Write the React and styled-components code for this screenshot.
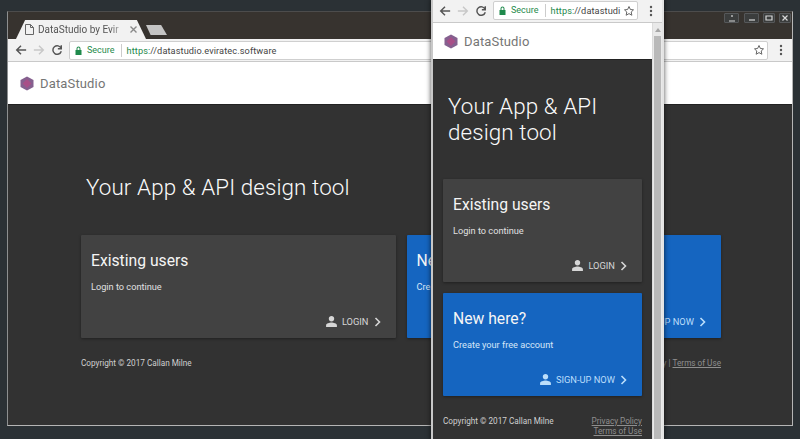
import React from "react";
import styled, { createGlobalStyle } from "styled-components";

const Global = createGlobalStyle`
  html, body { margin: 0; padding: 0; background: #2b3135; overflow: hidden; }
  #root { width: 800px; height: 439px; }
  * { box-sizing: border-box; }
`;

const Desktop = styled.div`
  position: relative;
  width: 800px;
  height: 439px;
  overflow: hidden;
  background: #2b3135;
  font-family: Roboto, "Liberation Sans", sans-serif;
`;

const DesktopWindow = styled.div`
  position: absolute;
  left: 7px;
  top: 11px;
  width: 786px;
  height: 415px;
  display: flex;
  flex-direction: column;
  background: #37332f;
  border: 1px solid #4c4c4c;
  border-bottom-color: #b5b5b5;
  border-right-color: #b5b5b5;
  border-left-color: #8d8f90;
`;

const PhoneWindow = styled.div`
  position: absolute;
  left: 431px;
  top: -1px;
  width: 233px;
  height: 442px;
  display: flex;
  flex-direction: column;
  background: #d8d8d8;
  border-left: 2px solid #c8c8c8;
  border-right: 2px solid #e3e3e3;
  box-shadow: 0 0 5px rgba(0, 0, 0, 0.7);
`;

const TabStrip = styled.div`
  height: 27px;
  display: flex;
  align-items: flex-end;
  padding-left: 8px;
  flex: none;
`;

const Tab = styled.div`
  width: 130px;
  height: 19px;
  display: flex;
  align-items: center;
  gap: 4px;
  padding: 0 9px;
  background: #f2f2f2;
  clip-path: polygon(0 100%, 7% 0, 93% 0, 100% 100%);
  font-size: 10px;
  color: #555;
  white-space: nowrap;
`;

const TabTitle = styled.span`
  flex: 1;
  min-width: 0;
  -webkit-mask-image: linear-gradient(90deg, #000 82%, transparent);
  mask-image: linear-gradient(90deg, #000 82%, transparent);
`;

const TabClose = styled.svg`
  width: 7px;
  height: 7px;
  flex: none;
  fill: none;
  stroke: #8a8a8a;
  stroke-width: 1.4;
`;

const NewTab = styled.div`
  width: 21px;
  height: 10px;
  margin: 0 0 4px 0;
  background: #c4c4c4;
  clip-path: polygon(0 0, 72% 0, 100% 100%, 22% 100%);
`;

const Toolbar = styled.div`
  flex: none;
  height: ${(p) => p.$h}px;
  display: flex;
  align-items: center;
  background: #f2f2f2;
  padding: 0 5px 0 ${(p) => p.$left}px;
  gap: 6px;
  border-bottom: 1px solid #c9c9c9;
`;

const NavIcon = styled.svg`
  width: 12px;
  height: 12px;
  flex: none;
  fill: none;
  stroke: ${(p) => p.$color || "#555"};
  stroke-width: 1.7;
`;

const UrlBar = styled.div`
  flex: 1;
  min-width: 0;
  height: 19px;
  display: flex;
  align-items: center;
  padding: 0 2px 0 5px;
  background: #fff;
  border: 1px solid #cfcfcf;
  border-radius: 2px;
  font-size: 9.2px;
  white-space: nowrap;
  letter-spacing: 0.1px;
`;

const Secure = styled.span`
  display: flex;
  align-items: center;
  gap: 5px;
  color: #1f8a4c;
  font-size: 9px;
  letter-spacing: 0;
  padding-right: 6px;
  margin-right: 5px;
  border-right: 1px solid #ccc;
  line-height: 13px;
`;

const UrlText = styled.span`
  flex: 1;
  min-width: 0;
  color: #444;
`;

const Https = styled.span`
  color: #1f8a4c;
`;

const StarIcon = styled.svg`
  width: 12px;
  height: 12px;
  flex: none;
  fill: none;
  stroke: #666;
  stroke-width: 2;
`;

const LockIcon = styled.svg`
  width: 7px;
  height: 9px;
  flex: none;
  fill: #1f8a4c;
`;

const PageIcon = styled.svg`
  width: 9px;
  height: 11px;
  flex: none;
  fill: none;
  stroke: #666;
`;

const MenuDots = styled.svg`
  width: 12px;
  height: 12px;
  flex: none;
  margin-left: 1px;
  fill: #555;
`;

const Page = styled.div`
  flex: 1;
  min-height: 0;
  display: flex;
  background: #fff;
`;

const PageColumn = styled.div`
  flex: 1;
  min-width: 0;
  display: flex;
  flex-direction: column;
`;

const Header = styled.header`
  flex: none;
  height: ${(p) => p.$h}px;
  display: flex;
  align-items: center;
  gap: 6px;
  padding-left: ${(p) => p.$pad}px;
  background: #fff;
  color: #757575;
  font-size: 13px;
  letter-spacing: 0.15px;
`;

const Main = styled.main`
  flex: 1;
  min-height: 0;
  background: #323232;
  border-top: 1px solid #222;
  padding: ${(p) => p.$pad};
  color: #fff;
`;

const Title = styled.h1`
  margin: 0;
  font-weight: 300;
  font-size: 22.4px;
  line-height: 26px;
  letter-spacing: 0.1px;
  color: #fafafa;
  padding: ${(p) => p.$pad};
`;

const Cards = styled.div`
  display: flex;
  flex-direction: ${(p) => (p.$stack ? "column" : "row")};
  gap: 11px;
`;

const Card = styled.section`
  flex: ${(p) => (p.$fixed ? "none" : "1 1 0")};
  min-width: 0;
  height: 103px;
  display: flex;
  flex-direction: column;
  padding: 16px 11px 0 10px;
  background: ${(p) => (p.$blue ? "#1565c0" : "#424242")};
  border-radius: 1px;
  box-shadow: 0 1px 3px rgba(0, 0, 0, 0.35);
`;

const CardTitle = styled.h2`
  margin: 0;
  font-weight: 400;
  font-size: 15.7px;
  line-height: 19px;
  white-space: nowrap;
  color: #f5f5f5;
`;

const CardText = styled.p`
  margin: 11px 0 0;
  font-size: 9.2px;
  line-height: 12px;
  white-space: nowrap;
  color: ${(p) => (p.$blue ? "#d6e6f8" : "#e0e0e0")};
`;

const CardAction = styled.div`
  margin-top: auto;
  height: 23px;
  display: flex;
  align-items: flex-start;
  justify-content: flex-end;
  gap: 4px;
  padding-right: 3px;
  font-size: 9.3px;
  line-height: 14px;
  color: ${(p) => (p.$blue ? "#bbdefb" : "#d6d6d6")};
  white-space: nowrap;
`;

const ActionIcon = styled.svg`
  width: 13px;
  height: 13px;
  flex: none;
  fill: currentColor;
`;

const Chevron = styled.svg`
  width: 9px;
  height: 10px;
  margin-top: 2px;
  flex: none;
  fill: none;
  stroke: currentColor;
  stroke-width: 1.6;
`;

const Footer = styled.footer`
  display: flex;
  justify-content: space-between;
  align-items: flex-start;
  padding-top: 20px;
  font-size: 8.2px;
  line-height: 10px;
  color: #d0d0d0;
  white-space: nowrap;
`;

const Links = styled.div`
  display: flex;
  flex-direction: ${(p) => (p.$stack ? "column" : "row")};
  align-items: flex-end;
  color: #8a8a8a;
`;

const FooterLink = styled.a`
  color: #8f8f8f;
  text-decoration: underline;
`;

const Scrollbar = styled.div`
  flex: none;
  width: 10px;
  display: flex;
  flex-direction: column;
  align-items: center;
  background: #e9e9e9;
  border-left: 1px solid #dcdcdc;
`;

const ScrollArrow = styled.div`
  margin: 5px 0 4px;
  width: 0;
  height: 0;
  flex: none;
  border-left: 3px solid transparent;
  border-right: 3px solid transparent;
  border-bottom: 4px solid #a6a6a6;
`;

const ScrollThumb = styled.div`
  width: 7px;
  flex: 1;
  background: #b9b9b9;
`;

const WindowControls = styled.div`
  position: absolute;
  right: 9px;
  top: 13px;
  display: flex;
  gap: 4px;
`;

const ControlButton = styled.div`
  width: ${(p) => p.$w}px;
  height: 10px;
  margin-right: ${(p) => p.$gap || 0}px;
  display: flex;
  align-items: center;
  justify-content: center;
  background: #3b3d3d;
  border: 1px solid #56585a;
  border-radius: 1px;
`;

const ControlGlyph = styled.svg`
  width: 8px;
  height: 8px;
  fill: none;
  stroke: #d8d8d8;
  stroke-width: 1.2;
`;

const LogoMark = styled.svg`
  width: 14px;
  height: 15px;
  flex: none;
`;

const Logo = () => (
  <LogoMark viewBox="0 0 14 15">
    <polygon points="7,0.5 13.500,4 13.500,11 7,14.500 0.500,11 0.500,4" fill="#85608f" />
    <polygon points="7,3 11.500,7.500 7,12 2.500,7.500" fill="#a84f88" />
  </LogoMark>
);

const Person = () => (
  <ActionIcon viewBox="0 0 24 24">
    <path d="M12 12c2.900 0 5-2.400 5-5.200S14.900 2 12 2 7 4 7 6.800 9.100 12 12 12zm0 2c-3.500 0-10 1.700-10 5v3h20v-3c0-3.300-6.500-5-10-5z" />
  </ActionIcon>
);

const Next = () => (
  <Chevron viewBox="0 0 9 10">
    <path d="M2.500 1l4 4-4 4" />
  </Chevron>
);

const NavBar = ({ h, left, url }) => (
  <Toolbar $h={h} $left={left}>
    <NavIcon viewBox="0 0 14 14">
      <path d="M13 7H2M7 2 2 7l5 5" />
    </NavIcon>
    <NavIcon viewBox="0 0 14 14" $color="#c8c8c8">
      <path d="M1 7h11M7 2l5 5-5 5" />
    </NavIcon>
    <NavIcon viewBox="0 0 14 14">
      <path d="M11.800 5A5 5 0 1 0 12 8.500M12 1.500V5.500H8" />
    </NavIcon>
    <UrlBar>
      <Secure>
        <LockIcon viewBox="0 0 7 9">
          <path d="M1.500 4V2.500a2 2 0 0 1 4 0V4h1v5H.5V4zm1 0h2V2.500a1 1 0 0 0-2 0z" />
        </LockIcon>
        Secure
      </Secure>
      <UrlText>
        <Https>https:</Https>
        {url}
      </UrlText>
      <StarIcon viewBox="0 0 24 24">
        <path d="M12 3l2.800 6 6.200.7-4.600 4.300 1.300 6.500L12 17.200 6.300 20.500 7.600 14 3 9.700 9.200 9z" />
      </StarIcon>
    </UrlBar>
    <MenuDots viewBox="0 0 12 12">
      <circle cx="6" cy="2" r="1.200" />
      <circle cx="6" cy="6" r="1.200" />
      <circle cx="6" cy="10" r="1.200" />
    </MenuDots>
  </Toolbar>
);

const ExistingCard = ({ fixed }) => (
  <Card $fixed={fixed}>
    <CardTitle>Existing users</CardTitle>
    <CardText>Login to continue</CardText>
    <CardAction>
      <Person />
      LOGIN
      <Next />
    </CardAction>
  </Card>
);

const NewCard = ({ fixed }) => (
  <Card $blue $fixed={fixed}>
    <CardTitle>New here?</CardTitle>
    <CardText $blue>Create your free account</CardText>
    <CardAction $blue>
      <Person />
      SIGN-UP NOW
      <Next />
    </CardAction>
  </Card>
);

export default function App() {
  return (
    <Desktop>
      <Global />
      <DesktopWindow>
        <TabStrip>
          <Tab>
            <PageIcon viewBox="0 0 9 11">
              <path d="M.5.500h5l3 3v7h-8zM5.500.5v3h3" />
            </PageIcon>
            <TabTitle>DataStudio by Evir</TabTitle>
            <TabClose viewBox="0 0 7 7"><path d="M.5.500l6 6M6.500.5l-6 6" /></TabClose>
          </Tab>
          <NewTab />
        </TabStrip>
        <NavBar h={23} left={7} url="//datastudio.eviratec.software" />
        <Page>
          <PageColumn>
            <Header $h={42} $pad={12}>
              <Logo />
              DataStudio
            </Header>
            <Main $pad="69px 71px 0 73px">
              <Title $pad="0 0 35px 5px">Your App &amp; API design tool</Title>
              <Cards>
                <ExistingCard />
                <NewCard />
              </Cards>
              <Footer>
                <span>Copyright © 2017 Callan Milne</span>
                <Links>
                  <span>Privacy Policy |&nbsp;<FooterLink>Terms of Use</FooterLink></span>
                </Links>
              </Footer>
            </Main>
          </PageColumn>
        </Page>
      </DesktopWindow>
      <WindowControls>
        <ControlButton $w={15} $gap={1}>
          <ControlGlyph viewBox="0 0 8 8"><path d="M4 1v2M1 7h6" /></ControlGlyph>
        </ControlButton>
        <ControlButton $w={15}>
          <ControlGlyph viewBox="0 0 8 8"><path d="M1 6h6" /></ControlGlyph>
        </ControlButton>
        <ControlButton $w={12}>
          <ControlGlyph viewBox="0 0 8 8"><path d="M1 2h6v4H1z" /></ControlGlyph>
        </ControlButton>
        <ControlButton $w={12}>
          <ControlGlyph viewBox="0 0 8 8"><path d="M1.500 1.500l5 5M6.500 1.500l-5 5" /></ControlGlyph>
        </ControlButton>
      </WindowControls>
      <PhoneWindow>
        <NavBar h={24} left={6} url="//datastudi" />
        <Page>
          <PageColumn>
            <Header $h={36} $pad={11}>
              <Logo />
              DataStudio
            </Header>
            <Main $pad="0 10px">
              <Title $pad="33px 0 34px 5px">Your App &amp; API<br />design tool</Title>
              <Cards $stack>
                <ExistingCard fixed />
                <NewCard fixed />
              </Cards>
              <Footer>
                <span>Copyright © 2017 Callan Milne</span>
                <Links $stack>
                  <FooterLink>Privacy Policy</FooterLink>
                  <FooterLink>Terms of Use</FooterLink>
                </Links>
              </Footer>
            </Main>
          </PageColumn>
          <Scrollbar>
            <ScrollArrow />
            <ScrollThumb />
          </Scrollbar>
        </Page>
      </PhoneWindow>
    </Desktop>
  );
}
